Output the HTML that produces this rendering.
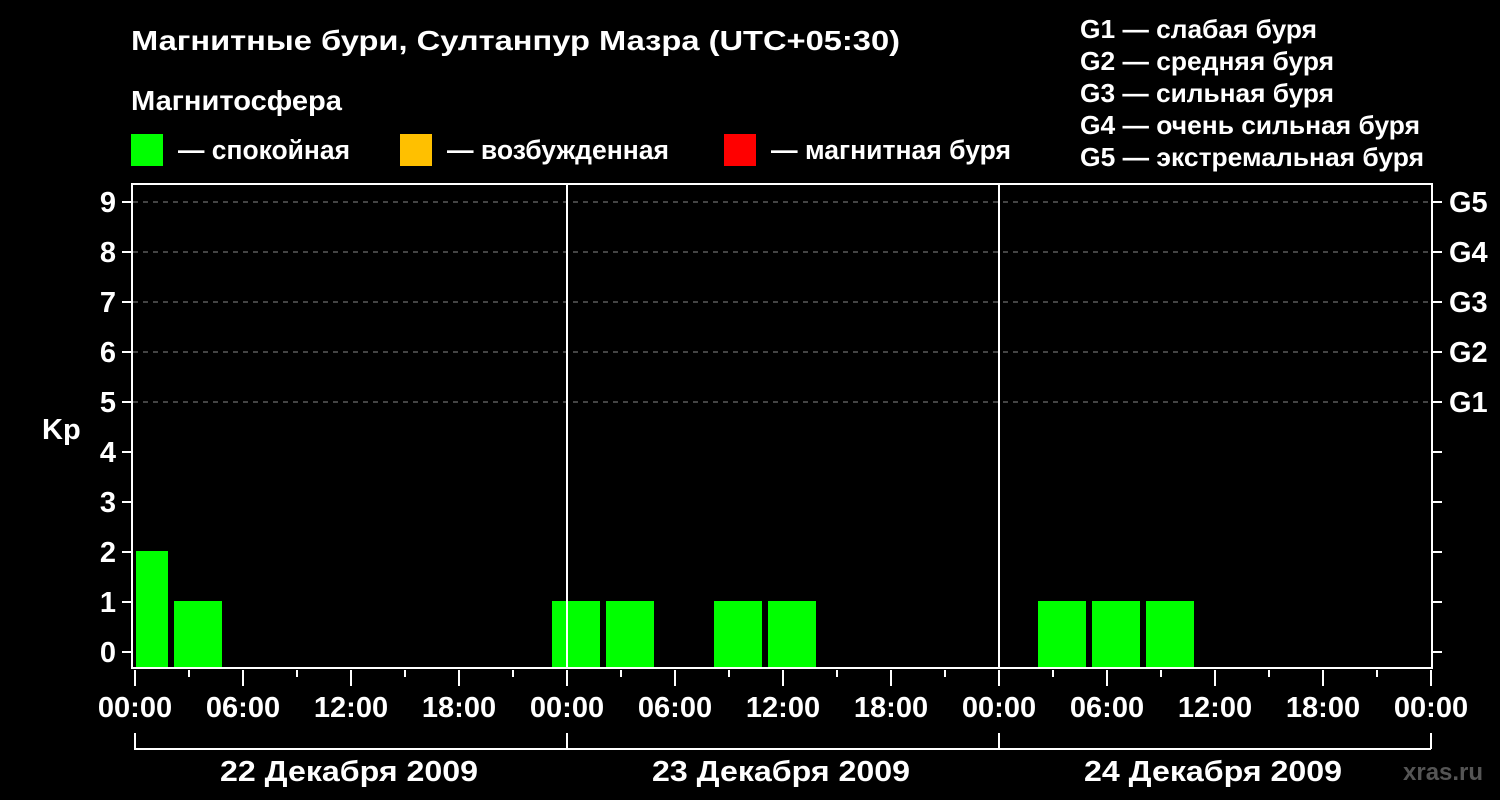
<!DOCTYPE html>
<html><head><meta charset="utf-8"><style>
body{margin:0;background:#000;width:1500px;height:800px;overflow:hidden}
svg{display:block}
text{font-family:"Liberation Sans",Arial,sans-serif;font-weight:bold;fill:#fff}
</style></head><body>
<svg width="1500" height="800" xmlns="http://www.w3.org/2000/svg">
<rect width="1500" height="800" fill="#000"/>
<text x="131" y="50" font-size="28" textLength="769" lengthAdjust="spacingAndGlyphs">Магнитные бури, Султанпур Мазра (UTC+05:30)</text>
<text x="131" y="110" font-size="28" textLength="211" lengthAdjust="spacingAndGlyphs">Магнитосфера</text>
<rect x="131" y="134" width="32" height="32" fill="#00ff00"/>
<text x="178" y="159" font-size="27" textLength="172" lengthAdjust="spacingAndGlyphs">— спокойная</text>
<rect x="400" y="134" width="32" height="32" fill="#ffc000"/>
<text x="447" y="159" font-size="27" textLength="222" lengthAdjust="spacingAndGlyphs">— возбужденная</text>
<rect x="724" y="134" width="32" height="32" fill="#ff0000"/>
<text x="771" y="159" font-size="27" textLength="240" lengthAdjust="spacingAndGlyphs">— магнитная буря</text>
<g font-size="26">
<text x="1080" y="38" textLength="237" lengthAdjust="spacingAndGlyphs">G1 — слабая буря</text>
<text x="1080" y="70" textLength="254" lengthAdjust="spacingAndGlyphs">G2 — средняя буря</text>
<text x="1080" y="102" textLength="254" lengthAdjust="spacingAndGlyphs">G3 — сильная буря</text>
<text x="1080" y="134" textLength="340" lengthAdjust="spacingAndGlyphs">G4 — очень сильная буря</text>
<text x="1080" y="166" textLength="344" lengthAdjust="spacingAndGlyphs">G5 — экстремальная буря</text>
</g>
<g stroke="#888" stroke-width="1" stroke-dasharray="5,5">
<line x1="133" y1="202" x2="1431" y2="202"/><line x1="133" y1="252" x2="1431" y2="252"/>
<line x1="133" y1="302" x2="1431" y2="302"/><line x1="133" y1="352" x2="1431" y2="352"/>
<line x1="133" y1="402" x2="1431" y2="402"/>
</g>
<g fill="#00ff00">
<rect x="136" y="551" width="32" height="117"/>
<rect x="174" y="601" width="48" height="67"/>
<rect x="552" y="601" width="48" height="67"/>
<rect x="606" y="601" width="48" height="67"/>
<rect x="714" y="601" width="48" height="67"/>
<rect x="768" y="601" width="48" height="67"/>
<rect x="1038" y="601" width="48" height="67"/>
<rect x="1092" y="601" width="48" height="67"/>
<rect x="1146" y="601" width="48" height="67"/>
</g>
<g stroke="#fff" stroke-width="2" fill="none">
<rect x="132" y="184" width="1300" height="484"/>
<line x1="567" y1="184" x2="567" y2="668"/>
<line x1="999" y1="184" x2="999" y2="668"/>
<path d="M122 202h10M122 252h10M122 302h10M122 352h10M122 402h10M122 452h10M122 502h10M122 552h10M122 602h10M122 652h10"/>
<path d="M1432 202h10M1432 252h10M1432 302h10M1432 352h10M1432 402h10M1432 452h10M1432 502h10M1432 552h10M1432 602h10M1432 652h10"/>
<path d="M135 670v16M189 670v7M243 670v16M297 670v7M351 670v16M405 670v7M459 670v16M513 670v7M567 670v16M621 670v7M675 670v16M729 670v7M783 670v16M837 670v7M891 670v16M945 670v7M999 670v16M1053 670v7M1107 670v16M1161 670v7M1215 670v16M1269 670v7M1323 670v16M1377 670v7M1431 670v16"/>
<path d="M135 733v16h1296M567 733v16M999 733v16M1431 733v16"/>
</g>
<g font-size="29" text-anchor="end">
<text x="116" y="212">9</text><text x="116" y="262">8</text><text x="116" y="312">7</text>
<text x="116" y="362">6</text><text x="116" y="412">5</text><text x="116" y="462">4</text>
<text x="116" y="512">3</text><text x="116" y="562">2</text><text x="116" y="612">1</text>
<text x="116" y="662">0</text>
</g>
<text x="42" y="439" font-size="29">Kp</text>
<g font-size="29">
<text x="1449" y="212">G5</text><text x="1449" y="262">G4</text><text x="1449" y="312">G3</text>
<text x="1449" y="362">G2</text><text x="1449" y="412">G1</text>
</g>
<g font-size="29" text-anchor="middle">
<text x="135" y="717">00:00</text><text x="243" y="717">06:00</text><text x="351" y="717">12:00</text>
<text x="459" y="717">18:00</text><text x="567" y="717">00:00</text><text x="675" y="717">06:00</text>
<text x="783" y="717">12:00</text><text x="891" y="717">18:00</text><text x="999" y="717">00:00</text>
<text x="1107" y="717">06:00</text><text x="1215" y="717">12:00</text><text x="1323" y="717">18:00</text>
<text x="1431" y="717">00:00</text>
</g>
<g font-size="29">
<text x="220" y="781" textLength="258" lengthAdjust="spacingAndGlyphs">22 Декабря 2009</text>
<text x="652" y="781" textLength="258" lengthAdjust="spacingAndGlyphs">23 Декабря 2009</text>
<text x="1084" y="781" textLength="258" lengthAdjust="spacingAndGlyphs">24 Декабря 2009</text>
</g>
<text x="1403" y="780" font-size="24" style="fill:#555">xras.ru</text>
</svg>
</body></html>
